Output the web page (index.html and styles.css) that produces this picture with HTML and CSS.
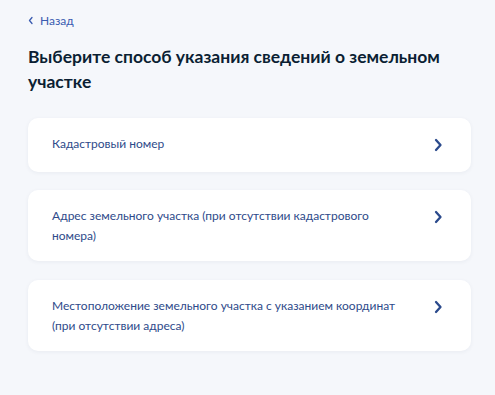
FILE: index.html
```html
<!DOCTYPE html>
<html lang="ru">
<head>
    <meta charset="UTF-8">
    <title>Способ указания сведений</title>
    <link rel="stylesheet" href="styles.css">
</head>
<body>
    <div class="page">
        <a href="#" class="back">
            <svg class="back-icon" width="6" height="9" viewBox="0 0 6 9">
                <path d="M4 1.5 L1.5 4.5 L4 7.5" fill="none" stroke="currentColor" stroke-width="1.3" stroke-linecap="round" stroke-linejoin="round"/>
            </svg>
            <span>Назад</span>
        </a>

        <h1 class="title">Выберите способ указания сведений о земельном участке</h1>

        <div class="options">
            <a href="#" class="option">
                <span class="option-text">Кадастровый номер</span>
                <svg class="option-icon" width="24" height="24" viewBox="0 0 24 24">
                    <path d="M10 7 L14.5 12 L10 17" fill="none" stroke="currentColor" stroke-width="2.3" stroke-linecap="round" stroke-linejoin="round"/>
                </svg>
            </a>
            <a href="#" class="option">
                <span class="option-text">Адрес земельного участка (при отсутствии кадастрового номера)</span>
                <svg class="option-icon" width="24" height="24" viewBox="0 0 24 24">
                    <path d="M10 7 L14.5 12 L10 17" fill="none" stroke="currentColor" stroke-width="2.3" stroke-linecap="round" stroke-linejoin="round"/>
                </svg>
            </a>
            <a href="#" class="option">
                <span class="option-text">Местоположение земельного участка с указанием координат (при отсутствии адреса)</span>
                <svg class="option-icon" width="24" height="24" viewBox="0 0 24 24">
                    <path d="M10 7 L14.5 12 L10 17" fill="none" stroke="currentColor" stroke-width="2.3" stroke-linecap="round" stroke-linejoin="round"/>
                </svg>
            </a>
        </div>
    </div>
</body>
</html>
```

FILE: styles.css
```css
body {
    margin: 0;
    background: #f5f7fb;
    font-family: Lato, 'Noto Sans', sans-serif;
    color: #0b1f33;
}

.page {
    padding: 9px 24px 40px 28px;
}

.back {
    display: inline-flex;
    align-items: center;
    gap: 6px;
    color: #3a5bb0;
    text-decoration: none;
    font-size: 12px;
    line-height: 16px;
}

.back-icon {
    color: #3a5bb0;
}

.title {
    margin: 15px 0 24px;
    font-size: 17.5px;
    line-height: 25px;
    font-weight: 700;
    color: #0b1f33;
}

.options {
    display: flex;
    flex-direction: column;
    gap: 18.5px;
}

.option {
    display: flex;
    align-items: flex-start;
    gap: 24px;
    padding: 15px 21px 15px 24px;
    background: #fff;
    border-radius: 10px;
    box-shadow: 0 1px 4px rgba(30, 50, 90, 0.06);
    text-decoration: none;
}

.option-text {
    flex: 1;
    font-size: 12px;
    line-height: 20px;
    padding-top: 1px;
    color: #2e4a8a;
}

.option-icon {
    flex: none;
    color: #2b4a8c;
}
```
